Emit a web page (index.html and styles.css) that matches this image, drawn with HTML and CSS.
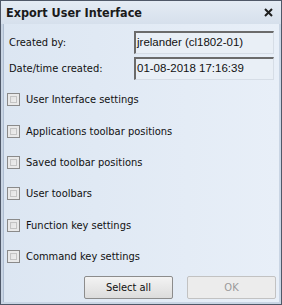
FILE: index.html
```html
<!DOCTYPE html>
<html lang="en">
<head>
    <meta charset="UTF-8">
    <title>Export User Interface</title>
    <link rel="stylesheet" href="styles.css">
</head>
<body>
    <div class="dialog">
        <div class="titlebar">
            <span class="title">Export User Interface</span>
            <svg class="close" width="9" height="9" viewBox="0 0 9 9">
                <path d="M1 1 L8 8 M8 1 L1 8" stroke="#1e1e1e" stroke-width="2"/>
            </svg>
        </div>
        <div class="body">
            <div class="field-row">
                <span class="field-label">Created by:</span>
                <div class="field-box">jrelander (cl1802-01)</div>
            </div>
            <div class="field-row">
                <span class="field-label">Date/time created:</span>
                <div class="field-box">01-08-2018 17:16:39</div>
            </div>
            <div class="options">
                <label class="option"><span class="check"></span>User Interface settings</label>
                <label class="option"><span class="check"></span>Applications toolbar positions</label>
                <label class="option"><span class="check"></span>Saved toolbar positions</label>
                <label class="option"><span class="check"></span>User toolbars</label>
                <label class="option"><span class="check"></span>Function key settings</label>
                <label class="option"><span class="check"></span>Command key settings</label>
            </div>
            <div class="buttons">
                <button class="btn">Select all</button>
                <button class="btn disabled">OK</button>
            </div>
        </div>
    </div>
</body>
</html>
```

FILE: styles.css
```css
body {
    margin: 0;
    background-color: #fff;
    font-family: "DejaVu Sans Condensed", "DejaVu Sans", sans-serif;
    font-size: 11px;
    color: #111;
}
.dialog {
    width: 282px;
    height: 305px;
    box-sizing: border-box;
    border: 1px solid #4f5868;
    background-color: #c9d5e4;
    display: flex;
    flex-direction: column;
}
.titlebar {
    height: 23px;
    display: flex;
    align-items: center;
    justify-content: space-between;
    padding: 0 8px 0 5px;
    background: linear-gradient(#e4ebf4, #d6e0ec);
}
.title {
    font-weight: bold;
    font-size: 12.5px;
    color: #1a1a1a;
}
.close {
    display: block;
}
.body {
    flex-grow: 1;
    margin: 0 2px 2px 2px;
    border-left: 1px solid #aebdd1;
    background: linear-gradient(90deg, #dce6f2, #e8eff8);
    padding: 7px 4px 0 4px;
    display: flex;
    flex-direction: column;
}
.field-row {
    display: flex;
    align-items: center;
    height: 23px;
    margin-bottom: 3px;
}
.field-label {
    width: 125px;
    padding-left: 1px;
}
.field-box {
    flex-grow: 1;
    height: 23px;
    box-sizing: border-box;
    border-top: 2px solid #6b6b6b;
    border-left: 2px solid #6b6b6b;
    border-right: 1px solid #d6dde6;
    border-bottom: 1px solid #d6dde6;
    background-color: #e9eff6;
    padding: 3px 0 0 1px;
    margin-right: 1px;
    font-family: "Liberation Sans", Arial, sans-serif;
    font-size: 11.5px;
}
.options {
    display: flex;
    flex-direction: column;
    margin-top: 1px;
}
.option {
    display: flex;
    align-items: center;
    height: 31.4px;
}
.check {
    width: 13px;
    height: 13px;
    box-sizing: border-box;
    border: 1px solid #8a8a8a;
    background: linear-gradient(135deg, #dcdcdc, #f4f4f4);
    box-shadow: inset 0 0 0 2px #e9e9e9, inset 0 0 0 3px #c4c4c4;
    margin: 0 6px 0 -1px;
}
.buttons {
    display: flex;
    justify-content: flex-end;
    gap: 14px;
    margin: 4px -1px 0 0;
}
.btn {
    width: 89px;
    height: 23px;
    font-family: "DejaVu Sans Condensed", "DejaVu Sans", sans-serif;
    font-size: 11px;
    color: #111;
    border: 1px solid #8c8c8c;
    border-radius: 2px;
    background: linear-gradient(#f3f3f3, #dcdcdc);
}
.btn.disabled {
    color: #9a9a9a;
    border-color: #c2c2c2;
    background: #ececec;
}
```
